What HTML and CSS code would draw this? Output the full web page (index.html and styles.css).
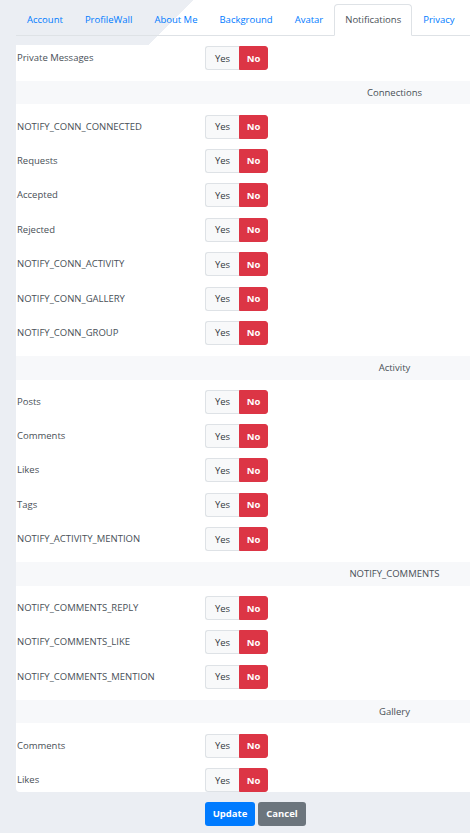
FILE: index.html
```html
<!DOCTYPE html>
<html>
<head>
    <title>Notifications</title>
    <link rel="stylesheet" href="styles.css">
</head>
<body>
    <ul class="tabs">
        <li><a href="#">Account</a></li>
        <li><a href="#">ProfileWall</a></li>
        <li><a href="#">About Me</a></li>
        <li><a href="#">Background</a></li>
        <li><a href="#">Avatar</a></li>
        <li class="active"><a href="#">Notifications</a></li>
        <li><a href="#">Privacy</a></li>
    </ul>

    <div class="card">
        <div class="row first">
            <span class="label">Private Messages</span>
            <div class="toggle"><button class="yes">Yes</button><button class="no">No</button></div>
        </div>

        <div class="head"><span>Connections</span></div>
        <div class="row">
            <span class="label">NOTIFY_CONN_CONNECTED</span>
            <div class="toggle"><button class="yes">Yes</button><button class="no">No</button></div>
        </div>
        <div class="row">
            <span class="label">Requests</span>
            <div class="toggle"><button class="yes">Yes</button><button class="no">No</button></div>
        </div>
        <div class="row">
            <span class="label">Accepted</span>
            <div class="toggle"><button class="yes">Yes</button><button class="no">No</button></div>
        </div>
        <div class="row">
            <span class="label">Rejected</span>
            <div class="toggle"><button class="yes">Yes</button><button class="no">No</button></div>
        </div>
        <div class="row">
            <span class="label">NOTIFY_CONN_ACTIVITY</span>
            <div class="toggle"><button class="yes">Yes</button><button class="no">No</button></div>
        </div>
        <div class="row">
            <span class="label">NOTIFY_CONN_GALLERY</span>
            <div class="toggle"><button class="yes">Yes</button><button class="no">No</button></div>
        </div>
        <div class="row">
            <span class="label">NOTIFY_CONN_GROUP</span>
            <div class="toggle"><button class="yes">Yes</button><button class="no">No</button></div>
        </div>

        <div class="head"><span>Activity</span></div>
        <div class="row">
            <span class="label">Posts</span>
            <div class="toggle"><button class="yes">Yes</button><button class="no">No</button></div>
        </div>
        <div class="row">
            <span class="label">Comments</span>
            <div class="toggle"><button class="yes">Yes</button><button class="no">No</button></div>
        </div>
        <div class="row">
            <span class="label">Likes</span>
            <div class="toggle"><button class="yes">Yes</button><button class="no">No</button></div>
        </div>
        <div class="row">
            <span class="label">Tags</span>
            <div class="toggle"><button class="yes">Yes</button><button class="no">No</button></div>
        </div>
        <div class="row">
            <span class="label">NOTIFY_ACTIVITY_MENTION</span>
            <div class="toggle"><button class="yes">Yes</button><button class="no">No</button></div>
        </div>

        <div class="head"><span>NOTIFY_COMMENTS</span></div>
        <div class="row">
            <span class="label">NOTIFY_COMMENTS_REPLY</span>
            <div class="toggle"><button class="yes">Yes</button><button class="no">No</button></div>
        </div>
        <div class="row">
            <span class="label">NOTIFY_COMMENTS_LIKE</span>
            <div class="toggle"><button class="yes">Yes</button><button class="no">No</button></div>
        </div>
        <div class="row">
            <span class="label">NOTIFY_COMMENTS_MENTION</span>
            <div class="toggle"><button class="yes">Yes</button><button class="no">No</button></div>
        </div>

        <div class="head"><span>Gallery</span></div>
        <div class="row">
            <span class="label">Comments</span>
            <div class="toggle"><button class="yes">Yes</button><button class="no">No</button></div>
        </div>
        <div class="row last">
            <span class="label">Likes</span>
            <div class="toggle"><button class="yes">Yes</button><button class="no">No</button></div>
        </div>
    </div>

    <div class="actions">
        <button class="btn update">Update</button>
        <button class="btn cancel">Cancel</button>
    </div>
</body>
</html>
```

FILE: styles.css
```css
body {
    margin: 0;
    font-family: "Open Sans", Arial, sans-serif;
    font-size: 9.5px;
    color: #495057;
    background: linear-gradient(135deg, transparent 136.5px, #ffffff 136.5px) no-repeat top left / 100% 45px, #ebeef3;
}

.tabs {
    list-style: none;
    margin: 0 0 0 16px;
    padding: 4px 0 0 0;
    display: flex;
    border-bottom: 1px solid #dee2e6;
}

.tabs li {
    margin-bottom: -1px;
}

.tabs a {
    display: block;
    height: 30px;
    line-height: 30px;
    padding: 0 10px;
    border: 1px solid transparent;
    border-radius: 4px 4px 0 0;
    color: #007bff;
    text-decoration: none;
    white-space: nowrap;
}

.tabs .active a {
    background-color: #ffffff;
    border-color: #dee2e6 #dee2e6 #ffffff;
    color: #495057;
}

.card {
    margin: 9px 0 0 16px;
    background-color: #ffffff;
    border-radius: 0 0 0 4px;
}

.row {
    display: flex;
    align-items: flex-start;
    height: 34.4px;
    padding: 5.2px 0 0 1px;
    box-sizing: border-box;
}

.row.first {
    height: 30px;
    padding-top: 1px;
}

.row.last {
    height: 29px;
}

.label {
    width: 188px;
    line-height: 24px;
}

.toggle {
    display: flex;
}

.toggle button {
    height: 24px;
    font-family: inherit;
    font-size: 9.5px;
    padding: 0;
    cursor: pointer;
}

.yes {
    width: 34px;
    background-color: #f8f9fa;
    border: 1px solid #dee2e6;
    border-right: none;
    border-radius: 3px 0 0 3px;
    color: #343a40;
}

.no {
    width: 29px;
    background-color: #dc3545;
    border: 1px solid #dc3545;
    border-radius: 0 3px 3px 0;
    color: #ffffff;
    font-weight: bold;
}

.head {
    padding: 6px 0 5px 0;
}

.head span {
    display: block;
    height: 23.4px;
    line-height: 23.4px;
    padding-left: 303px;
    background-color: #f7f8fa;
    text-align: center;
}

.actions {
    display: flex;
    gap: 3px;
    margin: 10px 0 0 205px;
}

.btn {
    height: 24px;
    padding: 0;
    border: none;
    border-radius: 3px;
    color: #ffffff;
    font-family: inherit;
    font-size: 9.5px;
    font-weight: bold;
    cursor: pointer;
}

.update {
    width: 50px;
    background-color: #007bff;
}

.cancel {
    width: 48px;
    background-color: #6c757d;
}
```
